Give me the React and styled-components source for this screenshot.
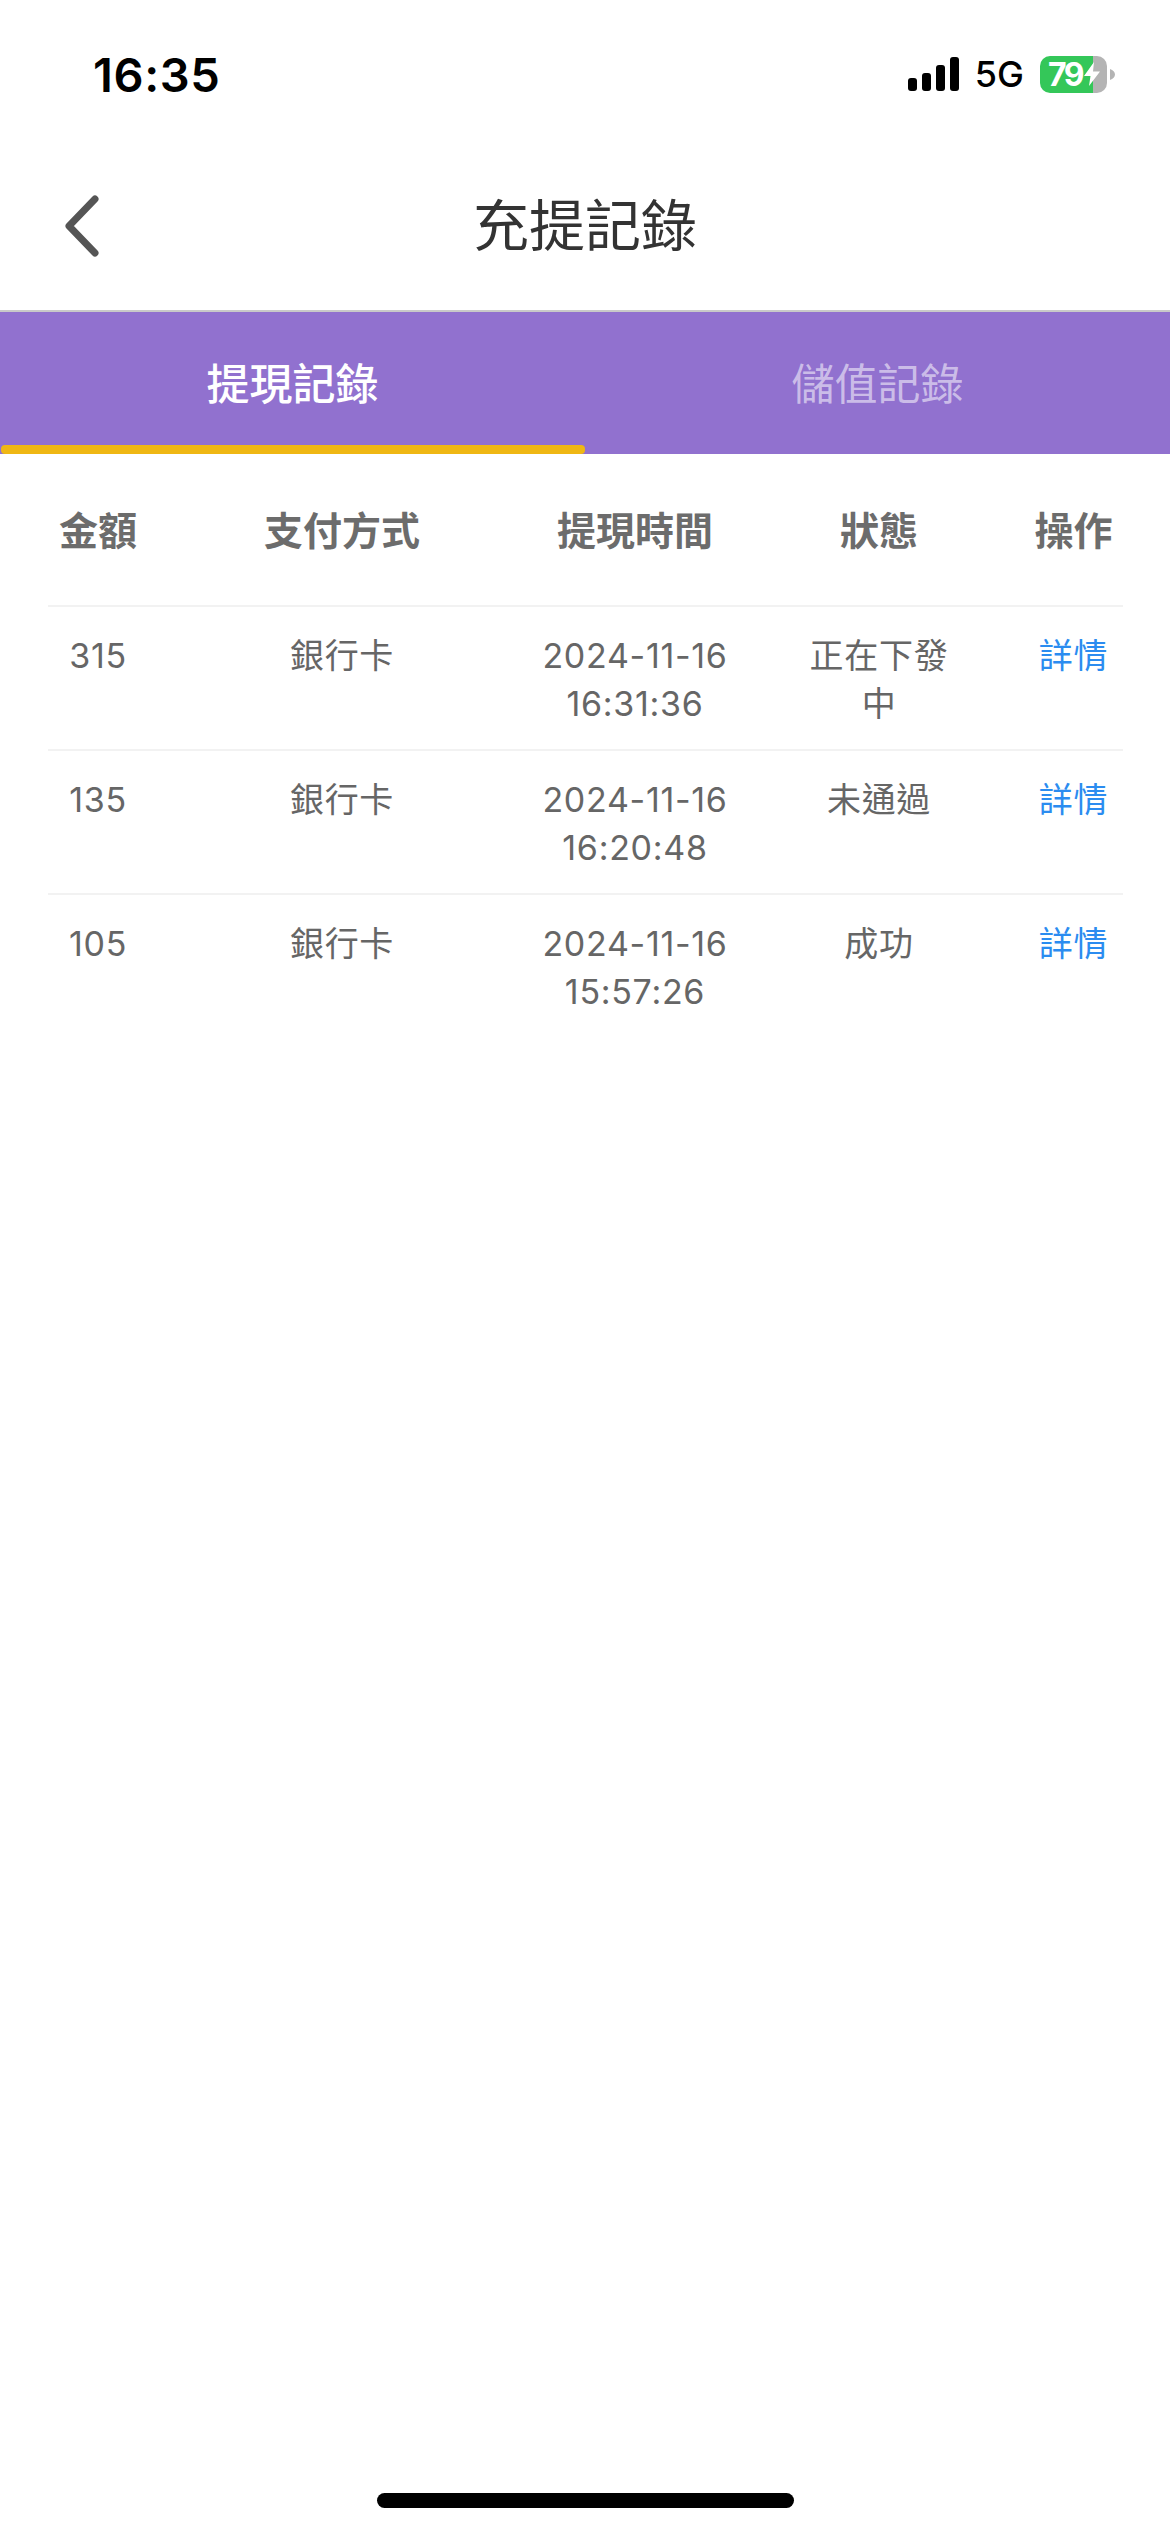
import React from 'react';
import styled, { createGlobalStyle, css } from 'styled-components';

const GlobalStyle = createGlobalStyle`
  html, body {
    margin: 0;
    padding: 0;
    background: #fff;
  }
  body {
    font-family: Inter, "Noto Sans CJK TC", sans-serif;
  }
  * {
    box-sizing: border-box;
  }
`;

const Page = styled.div`
  display: flex;
  flex-direction: column;
  width: 1170px;
  height: 2532px;
  overflow: hidden;
  background: #fff;
`;

const StatusBar = styled.div`
  display: flex;
  align-items: center;
  justify-content: space-between;
  flex: none;
  height: 148px;
  padding: 0 55px 0 93px;
`;

const Clock = styled.span`
  font-size: 47px;
  font-weight: 600;
  letter-spacing: 0.6px;
  color: #000;
`;

const StatusIcons = styled.div`
  display: flex;
  align-items: center;
`;

const Network = styled.span`
  margin: 0 16px 0 16px;
  font-size: 36px;
  font-weight: 500;
  color: #000;
`;

const Battery = styled.div`
  display: flex;
  align-items: center;
  width: 67px;
  height: 37px;
  padding-left: 8px;
  border-radius: 10px;
  background: linear-gradient(90deg, #34c759 53px, #b4b4b4 53px);
  font-size: 32px;
  font-weight: 700;
  letter-spacing: -2.5px;
  color: #fff;
`;

const BatteryNub = styled.svg`
  display: block;
  margin-left: 3px;
`;

const NavBar = styled.header`
  display: grid;
  grid-template-columns: 1fr auto 1fr;
  align-items: center;
  flex: none;
  height: 162px;
  padding: 0 62px 6px;
`;

const BackButton = styled.button`
  display: flex;
  justify-self: start;
  padding: 0;
  border: 0;
  background: none;
`;

const Title = styled.h1`
  margin: 0 0 10px;
  font-size: 56px;
  font-weight: 400;
  color: #333;
`;

const Tabs = styled.nav`
  display: grid;
  grid-template-columns: 1fr 1fr;
  flex: none;
  height: 144px;
  border-top: 2px solid #c9c9c9;
  background: #9171cf;
`;

const Tab = styled.div`
  position: relative;
  display: flex;
  align-items: center;
  justify-content: center;
  padding-bottom: 4px;
  font-size: 43px;
  font-weight: ${({ $active }) => ($active ? 500 : 400)};
  color: ${({ $active }) => ($active ? '#fff' : 'rgba(255, 255, 255, 0.55)')};

  &::after {
    content: '';
    display: ${({ $active }) => ($active ? 'block' : 'none')};
    position: absolute;
    left: 1px;
    right: 0;
    bottom: 0;
    height: 9px;
    border-radius: 4px;
    background: #efb714;
  }
`;

const Records = styled.section`
  padding: 0 47px 0 48px;
`;

const rowGrid = css`
  display: grid;
  grid-template-columns: 100px 388px 198px 290px 99px;
  justify-items: center;
  text-align: center;
`;

const HeadRow = styled.div`
  ${rowGrid}
  align-items: center;
  height: 151px;
  padding-bottom: 3px;
  font-size: 39px;
  font-weight: 700;
  color: #6c6c6c;
`;

const Row = styled.div`
  ${rowGrid}
  align-items: start;
  height: 144px;
  padding-top: 25px;
  border-top: 2px solid #f2f2f2;
  font-size: 34px;
  line-height: 48px;
  letter-spacing: 0.7px;
  color: #666;
`;

const Status = styled.span`
  max-width: 150px;
`;

const DetailLink = styled.a`
  color: #2b8cf0;
`;

const HomeBar = styled.div`
  flex: none;
  width: 417px;
  height: 15px;
  margin: auto auto 24px;
  border-radius: 8px;
  background: #000;
`;

const records = [
  { amount: '315', method: '銀行卡', time: '2024-11-16 16:31:36', status: '正在下發中' },
  { amount: '135', method: '銀行卡', time: '2024-11-16 16:20:48', status: '未通過' },
  { amount: '105', method: '銀行卡', time: '2024-11-16 15:57:26', status: '成功' },
];

function SignalIcon() {
  return (
    <svg width="51" height="34" viewBox="0 0 51 34" fill="#000">
      <rect x="0" y="21" width="9" height="13" rx="3" />
      <rect x="14" y="16" width="9" height="18" rx="3" />
      <rect x="28" y="8" width="9" height="26" rx="3" />
      <rect x="42" y="0" width="9" height="34" rx="3" />
    </svg>
  );
}

function BoltIcon() {
  return (
    <svg width="16" height="24" viewBox="0 0 16 24" fill="#fff" style={{ marginLeft: 2 }}>
      <path d="M10 0 L0 14 H6.5 L5 24 L16 9.5 H9 Z" />
    </svg>
  );
}

export default function App() {
  return (
    <Page>
      <GlobalStyle />
      <StatusBar>
        <Clock>16:35</Clock>
        <StatusIcons>
          <SignalIcon />
          <Network>5G</Network>
          <Battery>
            79
            <BoltIcon />
          </Battery>
          <BatteryNub width="5" height="11" viewBox="0 0 5 11" fill="#b4b4b4">
            <path d="M0 0 C3 1 5 3 5 5.5 C5 8 3 10 0 11 Z" />
          </BatteryNub>
        </StatusIcons>
      </StatusBar>

      <NavBar>
        <BackButton type="button">
          <svg width="40" height="62" viewBox="0 0 40 62" fill="none">
            <path
              d="M33 4 L7 31 L33 58"
              stroke="#555"
              strokeWidth="7"
              strokeLinecap="round"
              strokeLinejoin="round"
            />
          </svg>
        </BackButton>
        <Title>充提記錄</Title>
      </NavBar>

      <Tabs>
        <Tab $active>提現記錄</Tab>
        <Tab>儲值記錄</Tab>
      </Tabs>

      <Records>
        <HeadRow>
          <span>金額</span>
          <span>支付方式</span>
          <span>提現時間</span>
          <span>狀態</span>
          <span>操作</span>
        </HeadRow>
        {records.map((record) => (
          <Row key={record.time}>
            <span>{record.amount}</span>
            <span>{record.method}</span>
            <span>{record.time}</span>
            <Status>{record.status}</Status>
            <DetailLink>詳情</DetailLink>
          </Row>
        ))}
      </Records>

      <HomeBar />
    </Page>
  );
}
